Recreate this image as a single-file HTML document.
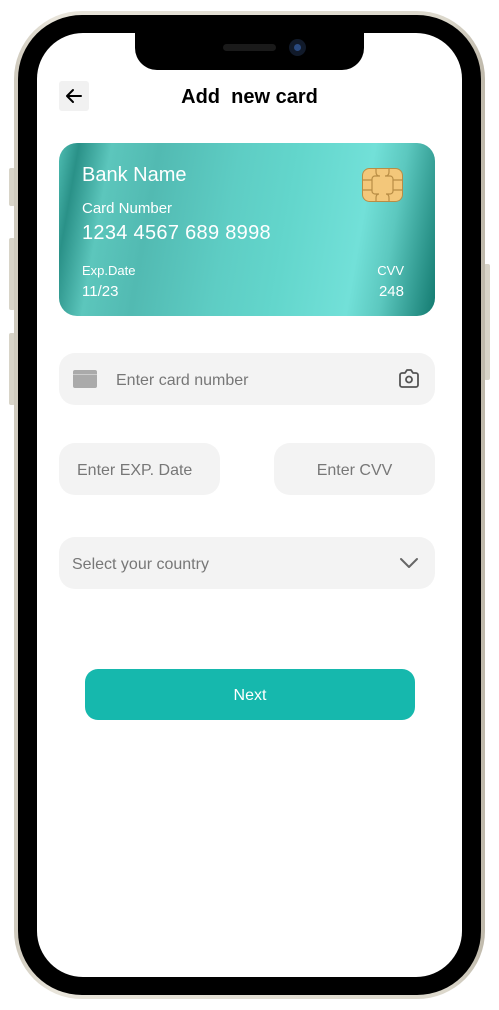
<!DOCTYPE html>
<html><head><meta charset="utf-8"><style>
*{margin:0;padding:0;box-sizing:border-box}
body{width:499px;height:1010px;background:#fff;position:relative;overflow:hidden;font-family:"Liberation Sans",sans-serif}
.abs{position:absolute}
.btn{background:#d8d4c8;border-radius:2px}
.frame{left:14px;top:11px;width:471px;height:988px;border-radius:68px;background:linear-gradient(90deg,#cfcabd,#e8e4da 8%,#dcd8cc 92%,#bfb9ab);}
.bezel{left:18px;top:15px;width:463px;height:980px;border-radius:64px;background:#000}
.screen{left:37px;top:33px;width:425px;height:944px;border-radius:46px;background:#fff;overflow:hidden}
.notch{left:135px;top:30px;width:229px;height:40px;background:#000;border-radius:0 0 22px 22px}
.field{background:#f3f3f3;border-radius:16px;color:#777;font-size:16px}
</style></head><body>
<div class="abs btn" style="left:9px;top:168px;width:6px;height:38px"></div>
<div class="abs btn" style="left:9px;top:238px;width:6px;height:72px"></div>
<div class="abs btn" style="left:9px;top:333px;width:6px;height:72px"></div>
<div class="abs btn" style="left:484px;top:264px;width:6px;height:116px"></div>
<div class="abs frame"></div>
<div class="abs bezel"></div>
<div class="abs screen"></div>
<div class="abs notch"></div>
<div class="abs" style="left:223px;top:44px;width:53px;height:7px;border-radius:4px;background:#1a1a1a"></div>
<div class="abs" style="left:289px;top:39px;width:17px;height:17px;border-radius:50%;background:#111a2a"></div>
<div class="abs" style="left:294px;top:44px;width:7px;height:7px;border-radius:50%;background:#2a4a80"></div>

<div class="abs" style="left:59px;top:81px;width:30px;height:30px;background:#f1f1f1;border-radius:3px"></div>
<svg class="abs" style="left:63px;top:85px" width="22" height="22" viewBox="0 0 22 22"><path d="M18 11H4M10 5L4 11l6 6" fill="none" stroke="#000" stroke-width="2" stroke-linecap="round" stroke-linejoin="round"/></svg>
<div class="abs" style="left:0;width:499px;top:86px;text-align:center;font-size:20px;font-weight:bold;color:#000">Add&nbsp; new card</div>

<div class="abs" style="left:59px;top:143px;width:376px;height:173px;border-radius:18px;background:linear-gradient(100deg,#4fbdb2 0%,#2a9188 5%,#5cc6bc 13%,#52bab2 25%,#5ecdc4 45%,#63d6cc 60%,#72e0d8 78%,#5cc8bf 86%,#137a70 100%);overflow:hidden;color:#fff">
<div class="abs" style="left:23px;top:21px;font-size:20px">Bank Name</div>
<div class="abs" style="left:23px;top:57px;font-size:15px">Card Number</div>
<div class="abs" style="left:23px;top:79px;font-size:20px;letter-spacing:0.3px">1234 4567 689 8998</div>
<div class="abs" style="left:23px;top:120px;font-size:13px">Exp.Date</div>
<div class="abs" style="left:23px;top:140px;font-size:15px">11/23</div>
<div class="abs" style="right:31px;top:120px;font-size:13px">CVV</div>
<div class="abs" style="right:31px;top:140px;font-size:15px">248</div>
<svg class="abs" style="left:303px;top:25px" width="41" height="34" viewBox="0 0 41 34"><rect x="0.5" y="0.5" width="40" height="33" rx="7" fill="#f3c77a" stroke="#b88d45"/><path d="M0 12h10M0 22h10M31 12h10M31 22h10M14 0v4q0 4 4 4h-5a3 3 0 0 0-3 3v12a3 3 0 0 0 3 3h4q-3 0-3 4v4M27 0v4q0 4-4 4h5a3 3 0 0 1 3 3v12a3 3 0 0 1-3 3h-4q3 0 3 4v4" fill="none" stroke="#b88d45" stroke-width="1.2"/></svg>
</div>

<div class="abs field" style="left:59px;top:353px;width:376px;height:52px"></div>
<div class="abs" style="left:73px;top:370px;width:24px;height:18px;background:#aaa;border-radius:2px"></div>
<div class="abs" style="left:73px;top:374px;width:24px;height:1px;background:#ccc"></div>
<div class="abs" style="left:116px;top:372px;font-size:16px;color:#777">Enter card number</div>
<svg class="abs" style="left:398px;top:369px" width="22" height="20" viewBox="0 0 22 20"><path d="M2 6a2 2 0 0 1 2-2h3l2-3h4l2 3h3a2 2 0 0 1 2 2v10a2 2 0 0 1-2 2H4a2 2 0 0 1-2-2z" fill="none" stroke="#555" stroke-width="1.8" stroke-linejoin="round"/><circle cx="11" cy="10.5" r="3" fill="none" stroke="#555" stroke-width="1.8"/></svg>

<div class="abs field" style="left:59px;top:443px;width:161px;height:52px"></div>
<div class="abs" style="left:77px;top:462px;font-size:16px;color:#777">Enter EXP. Date</div>
<div class="abs field" style="left:274px;top:443px;width:161px;height:52px"></div>
<div class="abs" style="left:274px;width:161px;text-align:center;top:462px;font-size:16px;color:#777">Enter CVV</div>

<div class="abs field" style="left:59px;top:537px;width:376px;height:52px"></div>
<div class="abs" style="left:72px;top:556px;font-size:16px;color:#777">Select your country</div>
<svg class="abs" style="left:399px;top:557px" width="20" height="12" viewBox="0 0 20 12"><path d="M2 2l8 8 8-8" fill="none" stroke="#666" stroke-width="2" stroke-linecap="round" stroke-linejoin="round"/></svg>

<div class="abs" style="left:85px;top:669px;width:330px;height:51px;border-radius:13px;background:#16b8ad;color:#fff;font-size:16px;text-align:center;line-height:53px">Next</div>
</body></html>
